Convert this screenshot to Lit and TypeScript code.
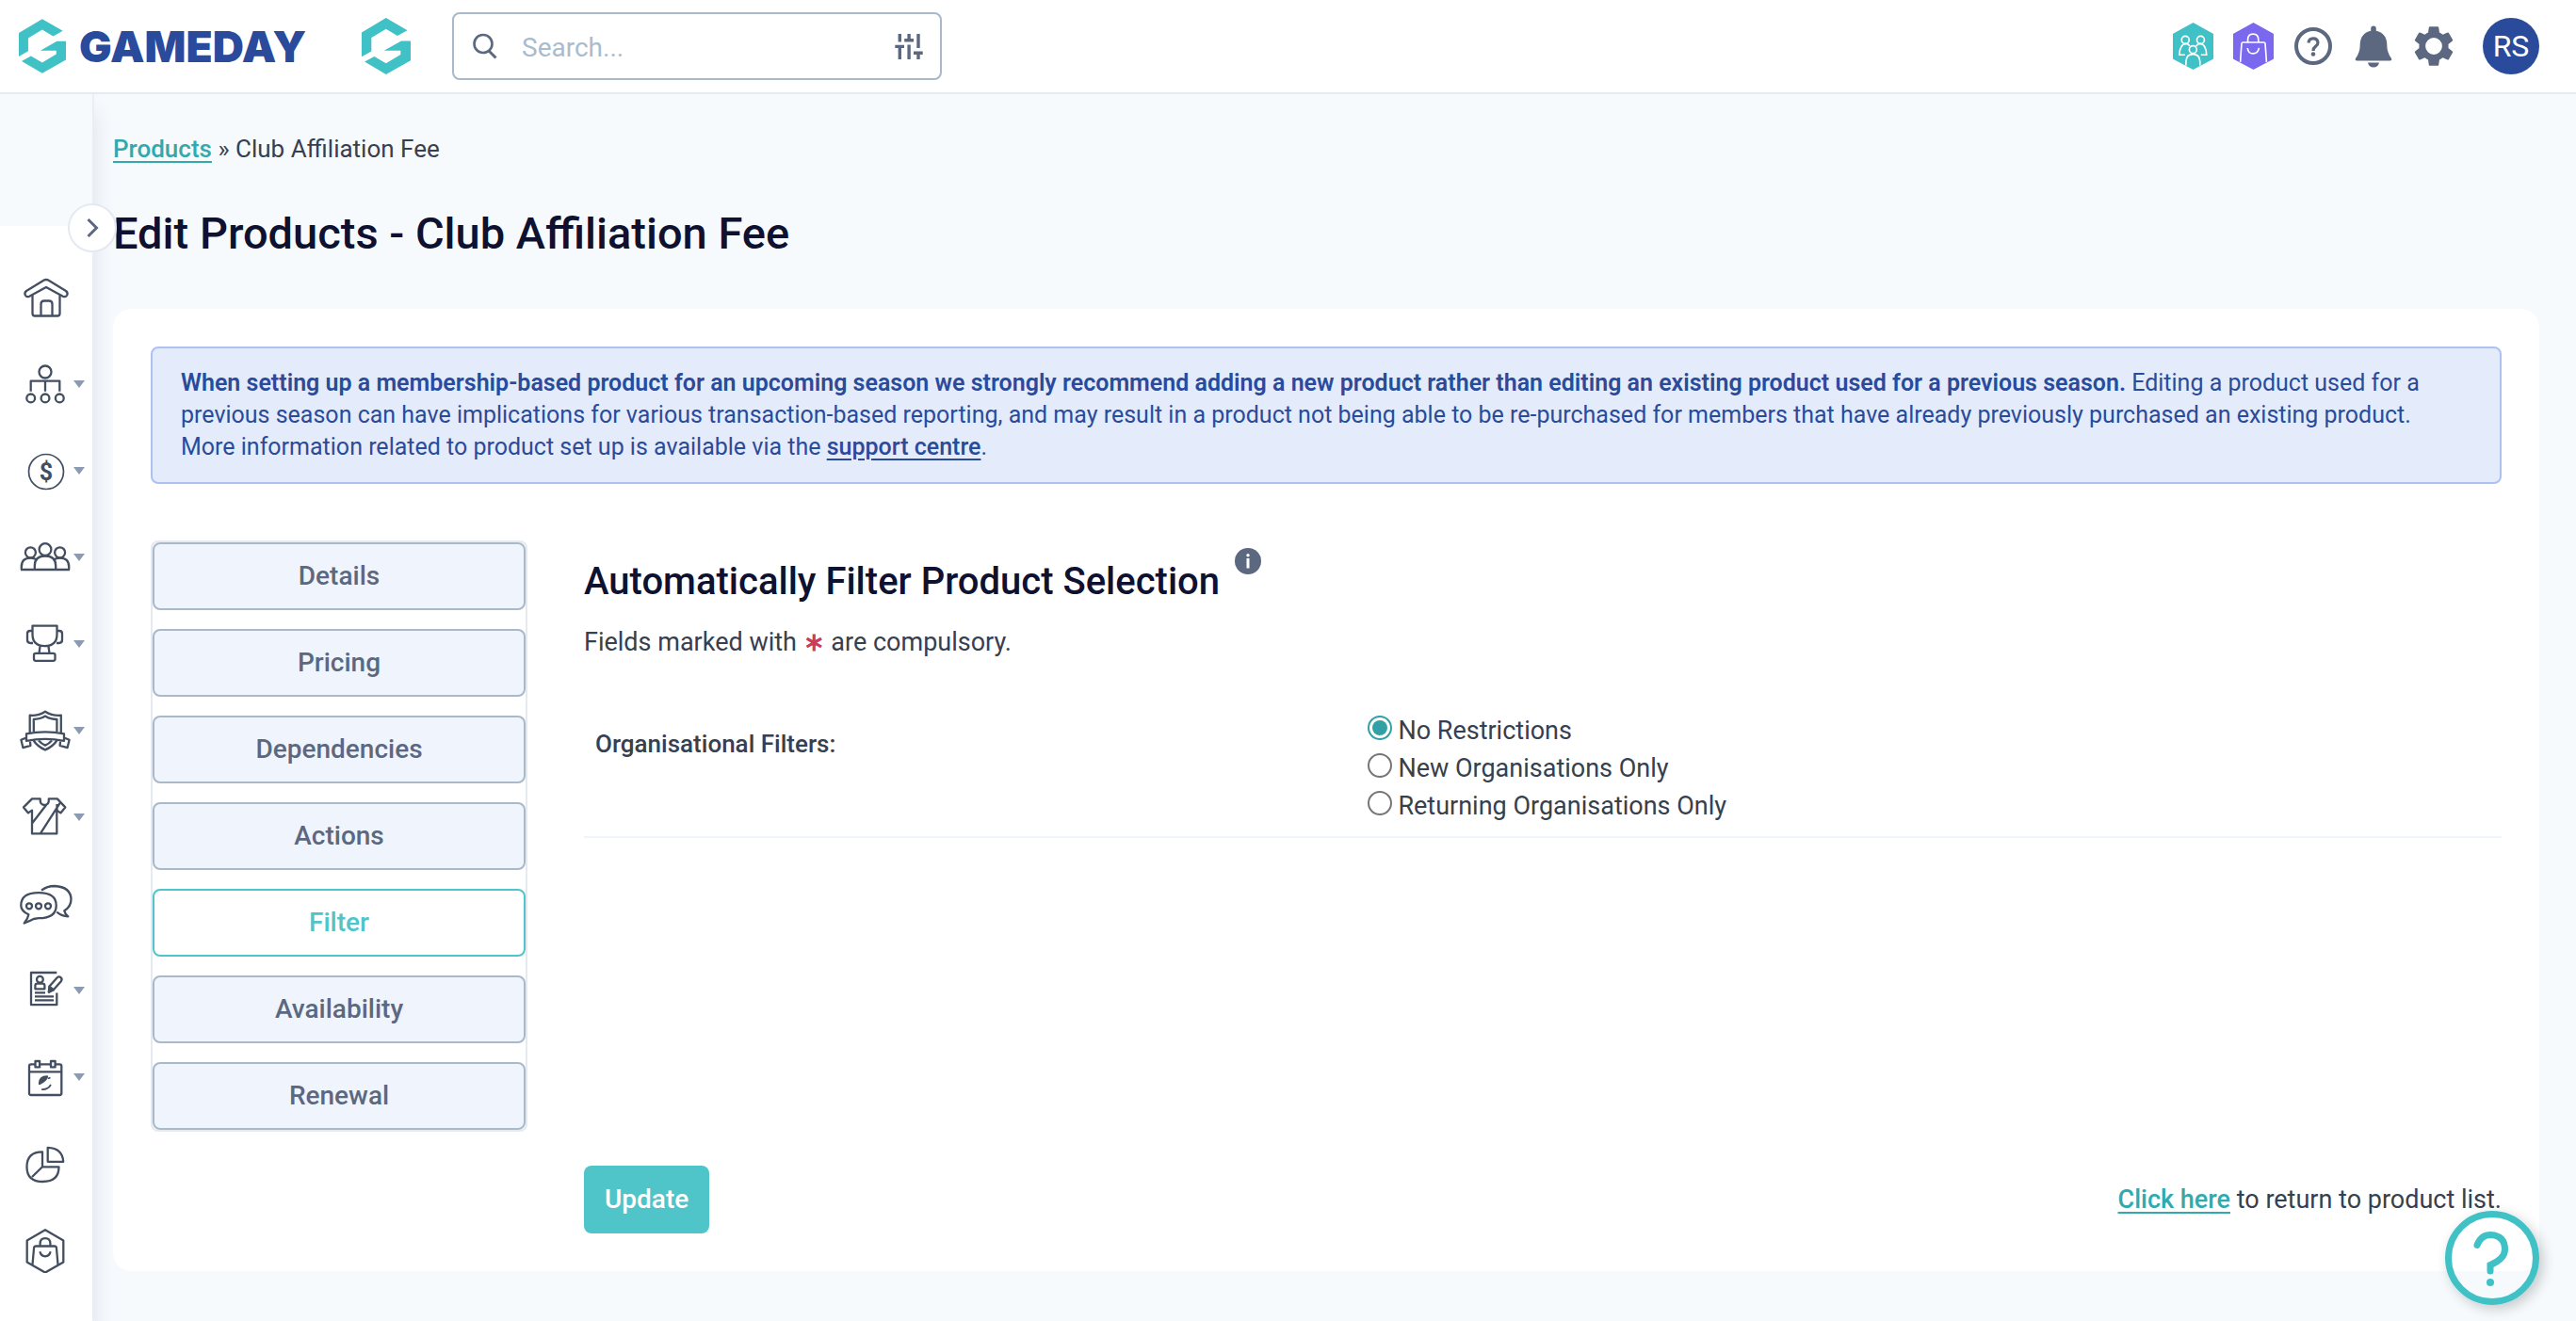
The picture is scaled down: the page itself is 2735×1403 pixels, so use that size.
import { LitElement, html, css, svg } from "lit";
import { customElement, property, state } from "lit/decorators.js";
import { classMap } from "lit/directives/class-map.js";

const navIcons: Record<string, unknown> = {
  Home: svg`<path d="M31 5q1.200 0 2.200.6L52 17q2.400 2 1.200 4.500-1.600 2.500-4.400 1.200L31 13 13.200 22.700q-2.800 1.300-4.400-1.200Q7.600 19 10 17L28.800 5.600Q29.800 5 31 5z"/><path d="M16.500 21.500V41q0 2.500 2.500 2.500h24q2.500 0 2.500-2.500V21.500M25.500 43.500V31q0-3.500 3.500-3.500h5q3.500 0 3.500 3.500v12.500"/>`,
  Organisation: svg`<circle cx="30" cy="11" r="6.500"/><path d="M14.700 31.700V20.600h30.600v11.100M30 20.600v11.100"/><circle cx="14.700" cy="38.900" r="4.400"/><circle cx="30" cy="38.900" r="4.400"/><circle cx="45.300" cy="38.900" r="4.400"/>`,
  Finances: svg`<circle cx="31" cy="25" r="18.500" stroke-width="1.700"/><text class="dollar" x="31" y="33.500" text-anchor="middle">$</text>`,
  Members: svg`<circle cx="30" cy="15.600" r="6.400"/><circle cx="14.400" cy="18.800" r="5.500"/><circle cx="45.600" cy="18.800" r="5.500"/><path d="M18.800 37v-4q0-10.500 11.200-10.500T41.200 33v4M4.800 37v-3q0-9.300 9.600-9.300 4 0 6.600 2M55.200 37v-3q0-9.300-9.600-9.300-4 0-6.600 2M4 37h52"/>`,
  Competitions: svg`<path d="M16.500 4.600h26v9q0 12.600-13 12.600t-13-12.600zM16.500 10h-2.500q-3 0-3 3v6.500q0 3.500 3.500 3.500h2.500M42.500 10H45q3 0 3 3v6.500q0 3.500-3.500 3.500H42M24.500 26.500l-1 7.500M33.500 26.500l1 7.500"/><rect x="18" y="33.800" width="22.500" height="8" rx="2"/>`,
  Clubs: svg`<path d="M13.700 26V7.700Q22.500 8.500 30 3.700 37.500 8.500 46.800 7.700V26M17.800 25V12Q24.500 12 30 8.600 35.500 12 42.400 12v13"/><path d="M10 27.300Q30 23.500 50 27.300v7.600Q30 31 10 34.900zM10 31.500l-5.600 2.200 2 8.400 8-2.200-.6-5.400M50 31.500l5.600 2.200-2 8.400-8-2.200.6-5.400M17.600 34.500Q22 41 30 44.400 38 41 42.400 34.500M23 34.500Q26 38 30 39.600 34 38 37 34.500"/>`,
  Apparel: svg`<path d="M16 4.400h8.700Q24.300 11 29.300 11t4.500-6.600h9l8.500 9-5 6-4-2.800v24.800H16V16.600l-4 2.800-5-6zM31.800 10 16 30.500M46.300 7.800 25 41.200M42.500 10v7"/>`,
  Communications: svg`<path d="M12.400 35.200Q4.300 31.600 4.300 25.700 4.300 12.200 23 12.200t18.700 13.500Q41.700 39.200 23 39.200L17.700 40Q13 42.500 7.700 44.500q4-4.500 4.700-9.300zM26 9.700Q32 5 40 5q17 1 17.500 14 0 8-7.200 12.200.7 3.500 4 6.100-6 .2-12-4.600"/><circle cx="13" cy="26.300" r="3"/><circle cx="23" cy="26.300" r="3"/><circle cx="33" cy="26.300" r="3"/>`,
  Registrations: svg`<path d="M42.300 5H15v34.200h27.300V26.500M19 26.300h11M19 30.300h20M19 34.300h20"/><circle cx="24.400" cy="12.300" r="3.400"/><path d="M19.400 22.300v-3.500q0-2.200 2.200-2.200h5.600q2.200 0 2.200 2.200v3.500zM34.500 19.500l8-9q2-2 4-.3t.3 4l-8 9-5 2.300z"/><path d="m34 25.800.5-6 4.300 3.400z" fill="#434f61"/>`,
  Events: svg`<rect x="13" y="10.300" width="34.300" height="32.700" rx="2"/><path d="M13 18.300h34.300"/><rect x="19.500" y="7" width="4.600" height="6.400" fill="#fff"/><rect x="36" y="7" width="4.600" height="6.400" fill="#fff"/><path d="M24 31q0-7.500 8-7.500-1 4-8 7.500z" fill="#434f61"/><path d="M26 37q7 .5 10-5M33 25.500l2.500-1" stroke-width="1.700"/>`,
  Reports: svg`<path d="M27 11.300v16h17.500Q44.500 43 27.500 43T10.500 27.200 27 11.300zM27 27.300 16 38M32.700 6.800Q48.500 7.500 49.200 21.800H32.700z"/>`,
  Marketplace: svg`<path d="M30 2.200 49.300 13.400v23L30 47.600 10.700 36.400v-23z"/><path d="M16.500 39l1.600-18q.2-1.500 1.700-1.500h20.400q1.500 0 1.700 1.500l1.600 18M24.600 19.300v-2.500q0-5.600 5.400-5.600t5.400 5.600v2.500M24.400 25.300q1 5 5.600 5t5.600-5"/>`,
};

const navEntries: { label: string; menu: boolean }[] = [
  { label: "Home", menu: false },
  { label: "Organisation", menu: true },
  { label: "Finances", menu: true },
  { label: "Members", menu: true },
  { label: "Competitions", menu: true },
  { label: "Clubs", menu: true },
  { label: "Apparel", menu: true },
  { label: "Communications", menu: false },
  { label: "Registrations", menu: true },
  { label: "Events", menu: true },
  { label: "Reports", menu: false },
  { label: "Marketplace", menu: false },
];

const brandMark = html`<svg viewBox="60 57 151 174" width="100%" height="100%" aria-hidden="true">
  <path fill="#40c1c5" d="M60 102 135 57 201 95 170 112 135 91 90 118V160L60 177ZM69 192 99 176 135 197 180 170V158H129L182 128H211V188L135 231Z"/>
</svg>`;

@customElement("gd-header")
export class GdHeader extends LitElement {
  static styles = css`
    :host { display: block; }
    * { box-sizing: border-box; }
    .bar {
      display: flex; align-items: center; height: 100px; padding: 0 39px 0 20px;
      background: #fff; border-bottom: 2px solid #e5e9f2;
      font-family: Roboto, "Liberation Sans", sans-serif;
    }
    .brand { display: flex; align-items: center; gap: 14px; min-width: 364px; text-decoration: none; }
    .mark { width: 50px; height: 58px; }
    .word { font-family: Inter, sans-serif; font-weight: 900; font-size: 46px; line-height: 56px; color: #2a4b9b; }
    .switch { width: 52px; height: 60px; margin-right: 44px; }
    .search {
      display: flex; align-items: center; width: 520px; height: 72px; padding: 0 18px 0 20px;
      border: 2px solid #a9b9c9; border-radius: 8px;
    }
    .query {
      flex: 1; min-width: 0; margin-left: 26px; padding: 4px 0 0; border: 0; outline: 0; background: none;
      font: 400 28px/40px Roboto, "Liberation Sans", sans-serif; color: #36404e;
    }
    .query::placeholder { color: #a9bccd; opacity: 1; }
    button { display: flex; align-items: center; justify-content: center; padding: 0; border: 0; background: none; cursor: pointer; }
    .tools { display: flex; align-items: center; gap: 20px; margin-left: auto; }
    .tool { width: 44px; height: 52px; }
    .tool svg { flex: none; }
    .avatar { width: 60px; height: 60px; margin-left: 10px; border-radius: 50%; background: #2a4b9b; color: #fff; font: 400 32px/40px Roboto, "Liberation Sans", sans-serif; }
  `;

  render() {
    return html`<header class="bar">
      <a class="brand" href="#home"><span class="mark">${brandMark}</span><span class="word">GAMEDAY</span></a>
      <a class="switch" href="#dashboard" aria-label="Dashboard">${brandMark}</a>
      <form class="search" role="search">
        <svg width="26" height="28" viewBox="0 0 26 28" fill="none" stroke="#5c6880" stroke-width="2.600" aria-hidden="true"><circle cx="11" cy="11.500" r="9.500"/><path d="m17 19 7.500 7.500" stroke-width="3"/></svg>
        <input class="query" type="search" aria-label="Search" placeholder="Search...">
        <button type="button" aria-label="Search filters">
          <svg width="30" height="28" viewBox="0 0 30 28" fill="none" stroke="#5c6880" stroke-width="3.400"><path d="M5.300 1v8.600M.300 14.400h9.700M5.300 14v14M15.100 1v8M10.200 7.700h9.800M15.100 12.600V28M25 1v15M20 21.300h9.700M25 21v7"/></svg>
        </button>
      </form>
      <div class="tools">
        <button class="tool" aria-label="Community">
          <svg width="43" height="50" viewBox="80 72 130 150" fill="none" stroke="#fff" stroke-width="5"><path d="M145 74 208 109V186L145 220 82 186V109Z" fill="#40c1c5" stroke="#40c1c5" stroke-linejoin="round"/><circle cx="120" cy="127" r="12"/><circle cx="169" cy="127" r="12"/><path d="M134 147Q130 139 120 139 102 142 101 175H119M155 147Q159 139 169 139 187 142 188 175H170"/><circle cx="144.500" cy="158" r="12"/><path d="M122 209V196Q123 173 144.500 173T167 196V209"/></svg>
        </button>
        <button class="tool" aria-label="Marketplace">
          <svg width="43" height="50" viewBox="272 72 130 150" fill="none" stroke="#fff" stroke-width="5"><path d="M337 74 400 109V186L337 220 274 186V109Z" fill="#7a68ee" stroke="#7a68ee" stroke-linejoin="round"/><path d="M295 198 299 140Q299 135 304 135H370Q375 135 375 140L379 198M319 134V126Q319 108 336 108T353 126V134M318 153Q320 171 336 171T355 153"/></svg>
        </button>
        <button class="tool" aria-label="Help">
          <svg width="40" height="40" viewBox="0 0 40 40" fill="none" stroke="#5c6880"><circle cx="20" cy="20" r="18" stroke-width="4"/><path d="M15 16.500q.5-4.700 5-4.700t5 4.400q0 2.300-2.600 4.200-2.400 1.800-2.400 4.600" stroke-width="3.200"/><circle cx="20" cy="28.500" r="2.300" fill="#5c6880" stroke="none"/></svg>
        </button>
        <button class="tool" aria-label="Notifications">
          <svg width="40" height="46" viewBox="0 0 40 46" fill="#5c6880"><path d="M20 1.500q2.800 0 2.800 3v2.300q11.200 2.400 11.500 14.700 0 8.500 4.700 14.500 1 2.500-1.700 2.500H2.700Q0 38.500 1 36q4.700-6 4.700-14.500Q6 9.200 17.200 6.800V4.500q0-3 2.800-3zM14 40.500h12q-1.200 5-6 5t-6-5z"/></svg>
        </button>
        <button class="tool" aria-label="Settings">
          <svg width="52" height="52" viewBox="0 0 24 24" fill="#5c6880"><path d="M19.140 12.940c.04-.3.060-.610.060-.940 0-.320-.020-.640-.070-.940l2.030-1.580c.180-.140.230-.410.120-.610l-1.920-3.320c-.120-.220-.370-.290-.590-.220l-2.390.960c-.500-.380-1.030-.700-1.620-.940l-.360-2.540c-.040-.240-.240-.410-.480-.410h-3.840c-.240 0-.430.170-.470.410l-.360 2.540c-.590.240-1.130.570-1.620.940l-2.390-.960c-.220-.080-.470 0-.590.220L2.740 8.870c-.120.210-.080.470.120.610l2.030 1.580c-.050.300-.090.630-.090.940s.020.640.070.940l-2.030 1.580c-.180.140-.230.410-.120.610l1.920 3.320c.120.220.370.290.590.220l2.390-.960c.500.380 1.030.700 1.620.940l.360 2.540c.050.240.240.410.480.410h3.840c.240 0 .440-.170.470-.410l.360-2.540c.590-.240 1.130-.560 1.620-.940l2.390.960c.220.080.470 0 .590-.220l1.920-3.320c.120-.220.070-.470-.120-.610l-2.010-1.580zM12 16.100a4.100 4.100 0 1 1 0-8.200 4.100 4.100 0 0 1 0 8.200z"/></svg>
        </button>
        <button class="avatar" aria-label="Account">RS</button>
      </div>
    </header>`;
  }
}

@customElement("gd-sidebar")
export class GdSidebar extends LitElement {
  static styles = css`
    :host { display: block; }
    * { box-sizing: border-box; }
    .rail {
      position: relative; width: 100px; height: 100%; padding-top: 140px;
      border-right: 2px solid #e9eef7; box-shadow: 0 20px 20px rgba(42, 60, 110, 0.12);
      background: #f6fafd;
    }
    .list { display: flex; flex-direction: column; height: 100%; padding: 30px 0 0; margin: 0; list-style: none; background: #fff; }
    .link { display: flex; align-items: center; height: 92px; padding-left: 18px; }
    .caret { border: 6px solid transparent; border-top: 8px solid #8d9bb0; border-bottom: 0; }
    .dollar { font: 700 25px Roboto, sans-serif; fill: #434f61; stroke: none; }
    .toggle {
      position: absolute; top: 116px; right: -26px; display: flex; align-items: center; justify-content: center;
      width: 52px; height: 52px; padding: 0; border: 2px solid #e5e9f2; border-radius: 50%; background: #fff; cursor: pointer;
    }
  `;

  render() {
    return html`<nav class="rail" aria-label="Main">
      <ul class="list">
        ${navEntries.map(
          (entry) => html`<li><a class="link" href="#${entry.label.toLowerCase()}" aria-label=${entry.label}>
            <svg width="60" height="48" viewBox="0 0 60 48" fill="none" stroke="#434f61" stroke-width="2.300" stroke-linejoin="round">${navIcons[entry.label]}</svg>
            ${entry.menu ? html`<span class="caret"></span>` : null}
          </a></li>`
        )}
      </ul>
      <button class="toggle" aria-label="Expand menu">
        <svg width="14" height="22" viewBox="0 0 14 22" fill="none" stroke="#5c6880" stroke-width="3"><path d="m2.500 2 9 9-9 9"/></svg>
      </button>
    </nav>`;
  }
}

@customElement("gd-tabs")
export class GdTabs extends LitElement {
  static styles = css`
    :host { display: block; }
    .tabs { display: flex; flex-direction: column; gap: 20px; border: 2px solid #e4eaf0; border-radius: 8px; }
    .tab {
      height: 72px; padding: 0; border: 2px solid #a9b9c9; border-radius: 8px; background: #f0f5fd;
      font: 500 28px/40px Roboto, "Liberation Sans", sans-serif; color: #5c6880; cursor: pointer;
    }
    .tab.active { border-color: #4fc5ca; background: #fff; color: #4fc5ca; }
  `;

  @property({ attribute: false }) items: string[] = [];
  @property() active = "";

  render() {
    return html`<div class="tabs">
      ${this.items.map(
        (item) => html`<button class=${classMap({ tab: true, active: item === this.active })} @click=${() => this.pick(item)}>${item}</button>`
      )}
    </div>`;
  }

  private pick(item: string) {
    this.dispatchEvent(new CustomEvent("pick", { detail: item }));
  }
}

@customElement("app-root")
export class AppRoot extends LitElement {
  static styles = css`
    :host { display: block; font-family: Roboto, "Liberation Sans", sans-serif; color: #36404e; }
    * { box-sizing: border-box; }
    .page { display: flex; flex-direction: column; min-height: 100vh; background: #f6fafd; }
    .body { display: flex; flex: 1; }
    .main { flex: 1; min-width: 0; padding: 40px 39px 50px 20px; }
    .crumbs { font-size: 26px; line-height: 36px; }
    a { color: #32a9ad; font-weight: 500; text-decoration-thickness: 2px; text-underline-offset: 4px; }
    h1 { margin: 42px 0 50px; font-size: 47px; line-height: 60px; font-weight: 500; color: #0e1130; }
    .card { padding: 40px; border-radius: 20px; background: #fff; }
    .alert {
      margin-bottom: 60px; padding: 20px 60px 20px 30px; border: 2px solid #adc2f3; border-radius: 8px;
      background: #e4ebfa; color: #2a4b9b; font-size: 25px; line-height: 34px;
    }
    .alert strong { font-weight: 600; }
    .alert a { color: inherit; font-weight: 500; }
    .content { display: grid; grid-template-columns: 400px 1fr; gap: 36px 60px; }
    .heading { display: flex; gap: 16px; padding-top: 20px; }
    h2 { margin: 0; font-size: 40px; line-height: 48px; font-weight: 500; color: #0e1130; }
    .info { width: 28px; height: 28px; margin-top: -12px; padding: 0; border: 0; background: none; cursor: help; }
    .note { margin: 20px 0 42px; font-size: 27px; line-height: 40px; }
    .star { color: #cc3a5c; font-weight: 700; }
    .field {
      display: grid; grid-template-columns: 2fr 3fr; column-gap: 26px; margin: 0; padding: 12px;
      border: 0; border-bottom: 2px solid #f0f5fb;
    }
    .label { padding-top: 14px; font-size: 26px; line-height: 40px; font-weight: 500; }
    .option { display: flex; align-items: center; gap: 6px; font-size: 27px; line-height: 40px; }
    .radio {
      appearance: none; width: 26px; height: 26px; margin: 0 0 6px; padding: 3px;
      border: 2px solid #767676; border-radius: 50%; background: #fff content-box;
    }
    .radio:checked { border-color: #32a0a5; background: #32a0a5 content-box; }
    .footer { grid-column: 2; display: flex; align-items: center; justify-content: space-between; font-size: 27px; line-height: 40px; }
    .update {
      height: 72px; padding: 0 22px; border: 0; border-radius: 8px; background: #4fc5ca; color: #fff;
      font: 500 28px/40px Roboto, "Liberation Sans", sans-serif; cursor: pointer;
    }
    .help {
      position: fixed; right: 39px; bottom: 17px; display: flex; align-items: center; justify-content: center;
      width: 100px; height: 100px; padding: 0; border: 7px solid #40c1c5; border-radius: 50%;
      background: transparent; box-shadow: 4px 4px 14px rgba(0, 0, 0, 0.2); cursor: pointer;
    }
  `;

  @state() private tab = "Filter";
  @state() private choice = "No Restrictions";

  private readonly tabs = ["Details", "Pricing", "Dependencies", "Actions", "Filter", "Availability", "Renewal"];
  private readonly options = ["No Restrictions", "New Organisations Only", "Returning Organisations Only"];

  render() {
    return html`<div class="page">
      <gd-header></gd-header>
      <div class="body">
        <gd-sidebar></gd-sidebar>
        <main class="main">
          <nav class="crumbs" aria-label="Breadcrumb"><a href="#products">Products</a> » Club Affiliation Fee</nav>
          <h1>Edit Products - Club Affiliation Fee</h1>
          <section class="card">
            <div class="alert" role="note">
              <strong>When setting up a membership-based product for an upcoming season we strongly recommend adding a new product rather than editing an existing product used for a previous season.</strong>
              Editing a product used for a previous season can have implications for various transaction-based reporting, and may result in a product not being able to be re-purchased for members that have already previously purchased an existing product. More information related to product set up is available via the <a href="#support">support centre</a>.
            </div>
            <div class="content">
              <gd-tabs .items=${this.tabs} .active=${this.tab} @pick=${(e: CustomEvent<string>) => (this.tab = e.detail)}></gd-tabs>
              <div>
                <div class="heading">
                  <h2>Automatically Filter Product Selection</h2>
                  <button class="info" aria-label="More information">
                    <svg width="28" height="28" viewBox="0 0 28 28"><circle cx="14" cy="14" r="14" fill="#5c6880"/><circle cx="14" cy="7.800" r="1.700" fill="#fff"/><path d="M14 11v10.500" stroke="#fff" stroke-width="3"/></svg>
                  </button>
                </div>
                <p class="note">Fields marked with <span class="star">∗</span> are compulsory.</p>
                <div class="field" role="radiogroup" aria-labelledby="filters-label">
                  <div class="label" id="filters-label">Organisational Filters:</div>
                  <div>
                    ${this.options.map(
                      (option) => html`<label class="option">
                        <input class="radio" type="radio" name="filter" .checked=${option === this.choice} @change=${() => (this.choice = option)}>
                        ${option}
                      </label>`
                    )}
                  </div>
                </div>
              </div>
              <div class="footer">
                <button class="update">Update</button>
                <span><a href="#products">Click here</a> to return to product list.</span>
              </div>
            </div>
          </section>
        </main>
      </div>
      <button class="help" aria-label="Help centre">
        <svg width="86" height="86" viewBox="0 0 86 86" fill="none" stroke="#40c1c5" stroke-width="7" stroke-linecap="round"><path d="M27 29.500q4-11 14.500-11 15 1 15 15.500 0 10-15.500 16.500V57"/><circle cx="41" cy="69" r="4" fill="#40c1c5" stroke="none"/></svg>
      </button>
    </div>`;
  }
}
